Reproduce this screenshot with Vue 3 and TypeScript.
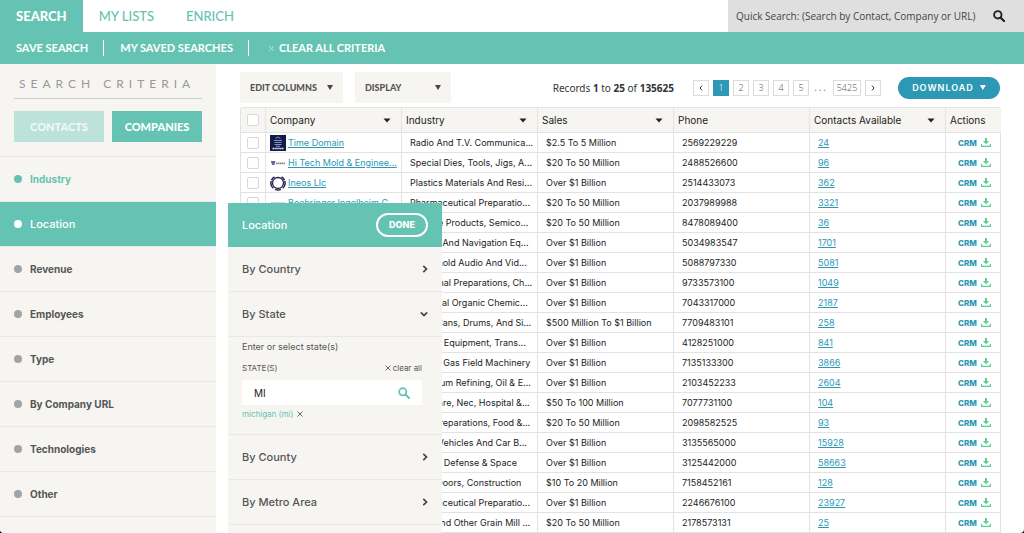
<script setup lang="ts">
import { ref } from 'vue'

interface Row {
  company: string
  logo: string
  industry: string
  sales: string
  phone: string
  contacts: string
}

const tabs = ['SEARCH', 'MY LISTS', 'ENRICH']
const criteria = ['Industry', 'Location', 'Revenue', 'Employees', 'Type', 'By Company URL', 'Technologies', 'Other']
const columns = [
  { label: 'Company', sortable: true },
  { label: 'Industry', sortable: true },
  { label: 'Sales', sortable: true },
  { label: 'Phone', sortable: false },
  { label: 'Contacts Available', sortable: true },
]
const pages = ['1', '2', '3', '4', '5']
const stateQuery = ref('MI')
const quickSearch = ref('')

const source: string[][] = [
  ['Time Domain', 'navy', 'Radio And T.V. Communica...', '$2.5 To 5 Million', '2569229229', '24'],
  ['Hi Tech Mold & Enginee...', 'word', 'Special Dies, Tools, Jigs, A...', '$20 To 50 Million', '2488526600', '96'],
  ['Ineos Llc', 'ring', 'Plastics Materials And Resi...', 'Over $1 Billion', '2514433073', '362'],
  ['Boehringer Ingelheim C...', 'faint', 'Pharmaceutical Preparatio...', '$20 To 50 Million', '2037989988', '3321'],
  ['', '', 'Storage Products, Semico...', '$20 To 50 Million', '8478089400', '36'],
  ['', '', 'Search And Navigation Eq...', 'Over $1 Billion', '5034983547', '1701'],
  ['', '', 'Household Audio And Vid...', 'Over $1 Billion', '5088797330', '5081'],
  ['', '', 'Medicinal Preparations, Ch...', 'Over $1 Billion', '9733573100', '1049'],
  ['', '', 'Industrial Organic Chemic...', 'Over $1 Billion', '7043317000', '2187'],
  ['', '', 'Metal Cans, Drums, And Si...', '$500 Million To $1 Billion', '7709483101', '258'],
  ['', '', 'Aircraft Equipment, Trans...', 'Over $1 Billion', '4128251000', '841'],
  ['', '', 'Oil And Gas Field Machinery', 'Over $1 Billion', '7135133300', '3866'],
  ['', '', 'Petroleum Refining, Oil & E...', 'Over $1 Billion', '2103452233', '2604'],
  ['', '', 'Hardware, Nec, Hospital &...', '$50 To 100 Million', '7077731100', '104'],
  ['', '', 'Food Preparations, Food &...', '$20 To 50 Million', '2098582525', '93'],
  ['', '', 'Motor Vehicles And Car B...', 'Over $1 Billion', '3135565000', '15928'],
  ['', '', 'Military Defense & Space', 'Over $1 Billion', '3125442000', '58663'],
  ['', '', 'Metal Doors, Construction', '$10 To 20 Million', '7158452161', '128'],
  ['', '', 'Pharmaceutical Preparatio...', 'Over $1 Billion', '2246676100', '23927'],
  ['', '', 'Flour And Other Grain Mill ...', '$20 To 50 Million', '2178573131', '25'],
]
const rows: Row[] = source.map(([company, logo, industry, sales, phone, contacts]) => ({
  company, logo, industry, sales, phone, contacts,
}))
</script>

<template>
  <div class="app">
    <header class="top">
      <nav class="tabs">
        <a v-for="(t, i) in tabs" :key="t" href="#" :class="['tab', { active: i === 0 }]">{{ t }}</a>
      </nav>
      <form class="quick" @submit.prevent>
        <input v-model="quickSearch" aria-label="Quick search" placeholder="Quick Search: (Search by Contact, Company or URL)" />
        <button class="plain" aria-label="Search">
          <svg width="12" height="12" viewBox="0 0 12 12"><circle cx="4.8" cy="4.8" r="3.7" fill="none" stroke="#222" stroke-width="1.9" /><path d="M7.7 7.7 11 11" stroke="#222" stroke-width="2.3" stroke-linecap="round" /></svg>
        </button>
      </form>
    </header>
    <nav class="sub">
      <a href="#">SAVE SEARCH</a>
      <a href="#">MY SAVED SEARCHES</a>
      <a href="#" class="clear"><svg width="5" height="5" viewBox="0 0 5 5"><path d="M0 0 5 5M5 0 0 5" stroke="#b9e3d9" stroke-width="1" /></svg>CLEAR ALL CRITERIA</a>
    </nav>

    <div class="body">
      <aside class="side">
        <h2>SEARCH CRITERIA</h2>
        <div class="switch">
          <button class="dim">CONTACTS</button>
          <button>COMPANIES</button>
        </div>
        <ul class="criteria">
          <li v-for="(c, i) in criteria" :key="c">
            <a href="#" :class="{ used: i === 0, open: i === 1 }"><i class="dot"></i>{{ c }}</a>
          </li>
        </ul>
      </aside>

      <main class="main">
        <div class="tools">
          <button class="menu edit">EDIT COLUMNS<i class="tri"></i></button>
          <button class="menu display">DISPLAY<i class="tri"></i></button>
          <p class="records">Records <b>1</b> to <b>25</b> of <b>135625</b></p>
          <nav class="pages">
            <a href="#" aria-label="Previous"><svg width="4" height="6" viewBox="0 0 4 6"><path d="M3 .7 1 3 3 5.3" fill="none" stroke="#333" /></svg></a>
            <a v-for="(p, i) in pages" :key="p" href="#" :class="{ current: i === 0 }">{{ p }}</a>
            <span class="gap">...</span>
            <a href="#" class="wide">5425</a>
            <a href="#" aria-label="Next"><svg width="4" height="6" viewBox="0 0 4 6"><path d="M1 .7 3 3 1 5.3" fill="none" stroke="#333" /></svg></a>
          </nav>
          <button class="download">DOWNLOAD<i class="tri"></i></button>
        </div>

        <table>
          <colgroup>
            <col class="c-check" />
            <col v-for="c in columns" :key="c.label" />
            <col class="c-act" />
          </colgroup>
          <thead>
            <tr>
              <th class="check"><input type="checkbox" aria-label="Select all" /></th>
              <th v-for="c in columns" :key="c.label">
                <div class="head">{{ c.label }}<svg v-if="c.sortable" width="8" height="5" viewBox="0 0 8 5"><path d="M.5 .5h7L4 4.5z" fill="#222" /></svg></div>
              </th>
              <th class="act">Actions</th>
            </tr>
          </thead>
          <tbody>
            <tr v-for="(r, i) in rows" :key="i">
              <td class="check"><input type="checkbox" :aria-label="'Select row ' + (i + 1)" /></td>
              <td class="co">
                <div v-if="r.company" class="company">
                  <svg v-if="r.logo === 'navy'" width="16" height="16" viewBox="0 0 16 16"><path fill="#101c4e" d="M0 0h16v16H0z" /><path d="M5.5 3.5 8 2l2.5 1.5M4 5.5h8M4.500 7.500h7M4.500 9.500h7M6 11.300h4" stroke="#97a2c0" stroke-width=".9" fill="none" /><path d="M2.500 13.500h11" stroke="#dde1ec" stroke-width="1.500" stroke-dasharray="1.500 .4" /></svg>
                  <svg v-else-if="r.logo === 'word'" width="16" height="16" viewBox="0 0 16 16"><path d="M1 6h4.500l-1 4H2z" fill="#5b70b0" /><path d="M1.500 6h2v1.500h-2z" fill="#b34a55" /><path d="M6 8.400h9.500" stroke="#888" stroke-width="1.800" stroke-dasharray="1.500 .4" /></svg>
                  <svg v-else-if="r.logo === 'ring'" width="16" height="16" viewBox="0 0 16 16"><circle cx="8" cy="8" r="5.500" fill="none" stroke="#262052" stroke-width="1.300" /><path d="M4.500 1.800a7 7 0 0 0-3 3.400M1.200 6a7 7 0 0 0 2 7.200M11.500 1.800a7 7 0 0 1 3 3.400M14.800 6a7 7 0 0 1-2 7.200M5 14.400a7 7 0 0 0 6 0" fill="none" stroke="#262052" stroke-width="1.500" /></svg>
                  <svg v-else width="16" height="16" viewBox="0 0 16 16"><path d="M1 8h14" stroke="#a9bccd" stroke-width="1.500" stroke-dasharray="2 .5" /></svg>
                  <a href="#">{{ r.company }}</a>
                </div>
              </td>
              <td>{{ r.industry }}</td>
              <td>{{ r.sales }}</td>
              <td>{{ r.phone }}</td>
              <td><a href="#">{{ r.contacts }}</a></td>
              <td class="act">
                <div class="actions">
                  <a href="#" class="crm">CRM</a>
                  <button class="plain" aria-label="Download contact"><svg width="10" height="9" viewBox="0 0 10 9"><path d="M4 0h2v3h2L5 6.200 2 3h2z" fill="#5dcb96" /><path d="M.6 6v2.300h8.800V6" fill="none" stroke="#5dcb96" stroke-width="1.200" /></svg></button>
                </div>
              </td>
            </tr>
          </tbody>
        </table>
      </main>

      <section class="panel">
        <header class="panel-head">Location<button>DONE</button></header>
        <button class="line">By Country<svg width="6" height="8" viewBox="0 0 6 8"><path d="M1.300 .9 4.500 4 1.300 7.100" fill="none" stroke="#444" stroke-width="1.700" /></svg></button>
        <button class="line">By State<svg width="8" height="6" viewBox="0 0 8 6"><path d="M.9 1.300 4 4.500 7.100 1.300" fill="none" stroke="#444" stroke-width="1.700" /></svg></button>
        <div class="states">
          <p>Enter or select state(s)</p>
          <div class="state-label">
            <label for="state">STATE(S)</label>
            <button class="plain"><svg width="6" height="6" viewBox="0 0 6 6"><path d="M.5 .5 5.500 5.500M5.500 .5 .5 5.500" stroke="#666" /></svg>clear all</button>
          </div>
          <div class="field">
            <input id="state" v-model="stateQuery" type="text" />
            <svg width="12" height="12" viewBox="0 0 12 12"><circle cx="4.800" cy="4.800" r="3.600" fill="none" stroke="#5fc4b1" stroke-width="1.700" /><path d="M7.600 7.600 11 11" stroke="#5fc4b1" stroke-width="2" stroke-linecap="round" /></svg>
          </div>
          <div class="chosen">michigan (mi)<button class="plain" aria-label="Remove michigan"><svg width="6" height="6" viewBox="0 0 6 6"><path d="M.5 .5 5.500 5.500M5.500 .5 .5 5.500" stroke="#666" /></svg></button></div>
        </div>
        <button class="line">By County<svg width="6" height="8" viewBox="0 0 6 8"><path d="M1.300 .9 4.500 4 1.300 7.100" fill="none" stroke="#444" stroke-width="1.700" /></svg></button>
        <button class="line">By Metro Area<svg width="6" height="8" viewBox="0 0 6 8"><path d="M1.300 .9 4.500 4 1.300 7.100" fill="none" stroke="#444" stroke-width="1.700" /></svg></button>
      </section>
    </div>
  </div>
</template>

<style>
body { background: #000; }
</style>

<style scoped>
* { box-sizing: border-box; }
.app {
  height: 100vh; display: flex; flex-direction: column; overflow: hidden;
  background: #fff; border-radius: 0 0 4px 4px; color: #222;
  font: 9px/12px Inter, "Liberation Sans", sans-serif;
}
button, input { font: inherit; color: inherit; margin: 0; }
button { border: 0; padding: 0; cursor: pointer; white-space: nowrap; }
a { color: inherit; text-decoration: none; }
svg { display: block; flex: none; }
.plain { background: none; display: flex; align-items: center; }

.top { height: 32px; flex: none; display: flex; justify-content: space-between; }
.tabs { display: flex; }
.tab { display: flex; align-items: center; padding: 0 16px; color: #65c3b3; font: 500 13px/16px Lato, sans-serif; }
.tab.active { background: #65c3b3; color: #fff; font-weight: 900; }
.quick { width: 296px; background: #dfdfdf; display: flex; align-items: center; padding: 0 19px 0 8px; }
.quick input { flex: 1; min-width: 0; border: 0; padding: 0; background: none; outline: 0; font: 10px/14px "Open Sans", sans-serif; }
.quick input::placeholder { color: #444; opacity: 1; }
.sub { height: 32px; flex: none; background: #65c3b3; color: #fff; display: flex; align-items: center; font: 700 11px/16px Lato, sans-serif; }
.sub a { padding: 0 15px 0 16px; border-right: 1px solid #fff; }
.sub .clear { display: flex; align-items: center; gap: 5px; padding: 0 20px; border: 0; }

.body { position: relative; flex: 1; min-height: 0; display: flex; }
.side { width: 216px; flex: none; background: #f6f5f2; }
h2 { margin: 11px 14px 0; padding-left: 5px; height: 24px; border-bottom: 1px solid #ccc; color: #999; font: 400 12px/17px Lato, sans-serif; letter-spacing: 5px; white-space: nowrap; }
.switch { display: flex; gap: 8px; padding: 12px 14px 14px; border-bottom: 1px solid #e8e8ea; }
.switch button { flex: 1; height: 31px; background: #65c3b3; color: #fff; font: 900 11px/16px Lato, sans-serif; }
.switch .dim { background: #bde2d9; color: #f1f8f5; }
.criteria { list-style: none; margin: 0; padding: 0; }
.criteria a { height: 45px; border-bottom: 1px solid #e8e8ea; display: flex; align-items: center; gap: 8px; padding: 0 14px; color: #555; font-weight: 700; font-size: 10px; }
.criteria .used { color: #65c3b3; }
.criteria .open { background: #65c3b3; color: #fff; font-weight: 500; font-size: 11px; }
.dot { width: 8px; height: 8px; border-radius: 50%; background: #a3a3a3; }
.used .dot { background: #65c3b3; }
.open .dot { background: #fff; }

.main { flex: 1; min-width: 0; padding: 8px 23px 0 24px; overflow: hidden; }
.tools { display: flex; align-items: center; height: 31px; margin-bottom: 4px; }
.menu { height: 31px; background: #f6f5f2; color: #555; display: flex; align-items: center; justify-content: space-between; padding: 0 10px; font: 900 9px/12px Lato, sans-serif; }
.edit { width: 103px; margin-right: 12px; }
.display { width: 96px; }
.tri { width: 6px; height: 5px; background: #444; clip-path: polygon(0 0, 100% 0, 50% 100%); }
.records { margin: 0 19px 0 auto; font: 10px/14px "Noto Sans", sans-serif; color: #333; white-space: nowrap; }
.pages { display: flex; gap: 4px; margin-right: 17px; font: 300 9px/14px "Open Sans", sans-serif; color: #555; }
.pages a { width: 16px; height: 16px; border: 1px solid #ddd; display: flex; align-items: center; justify-content: center; }
.pages .wide { width: 28px; }
.pages .current { background: #2d98b4; border-color: #2d98b4; color: #fff; }
.gap { width: 16px; padding-top: 1px; text-align: center; color: #2d98b4; letter-spacing: 2px; font-weight: 600; }
.download { width: 102px; height: 22px; margin-right: 1px; border-radius: 11px; background: #2d98b4; color: #fff; display: flex; align-items: center; justify-content: center; gap: 6px; font-weight: 600; letter-spacing: 1px; }
.download .tri { background: #fff; }

table { width: 100%; table-layout: fixed; border-collapse: separate; border-spacing: 0; border: 1px solid #e2e2e2; border-bottom: 0; border-right: 0; border-radius: 3px 3px 0 0; }
.c-check { width: 25px; }
.c-act { width: 55px; }
th, td { border-right: 1px solid #e2e2e2; border-bottom: 1px solid #e2e2e2; white-space: nowrap; overflow: hidden; text-align: left; }
th { height: 25px; padding: 0 4px; background: #f6f5f2; font-size: 10px; font-weight: 400; }
td { height: 20px; padding: 0 0 0 8px; }
td a { color: #2d98b4; text-decoration: underline; }
.head { display: flex; align-items: center; justify-content: space-between; padding-right: 6px; }
th.act { border-right: 0; }
.check { padding: 0 0 0 6px; }
.check input { display: block; appearance: none; width: 12px; height: 12px; border: 1px solid #d8d8d8; border-radius: 2px; background: #fff; }
td.co { padding: 0 0 0 4px; }
.company { display: flex; align-items: center; gap: 2px; }
.actions { display: flex; align-items: center; justify-content: space-between; padding: 0 9px 0 4px; }
td .crm { font-weight: 800; font-size: 8px; text-decoration: none; }

/* flyout that covers the left part of the grid */
.panel { position: absolute; left: 228px; top: 139px; bottom: 0; width: 214px; background: #f6f5f2; color: #555; overflow: hidden; font-size: 11px; }
.panel-head { height: 44px; background: #65c3b3; color: #fff; display: flex; align-items: center; justify-content: space-between; padding: 0 14px; font-weight: 500; }
.panel-head button { width: 52px; height: 24px; border: 2px solid #fff; border-radius: 12px; background: none; font-size: 9px; font-weight: 800; }
.line { width: 100%; height: 45px; background: none; border-bottom: 1px solid #e8e8ea; display: flex; align-items: center; justify-content: space-between; padding: 0 14px; font-weight: 500; }
.states { padding: 4px 20px 14px 14px; height: 98px; border-bottom: 1px solid #e8e8ea; font-size: 9px; }
.states p { margin: 0; }
.state-label { display: flex; justify-content: space-between; margin-top: 9px; font-size: 8px; }
.state-label button { gap: 2px; }
.field { height: 25px; margin-top: 6px; background: #fff; display: flex; align-items: center; padding: 0 12px; }
.field input { flex: 1; min-width: 0; border: 0; padding: 0; background: none; outline: 0; font-size: 10px; color: #222; }
.chosen { display: flex; align-items: center; gap: 4px; margin-top: 3px; color: #65c3b3; font-size: 8px; }
</style>
